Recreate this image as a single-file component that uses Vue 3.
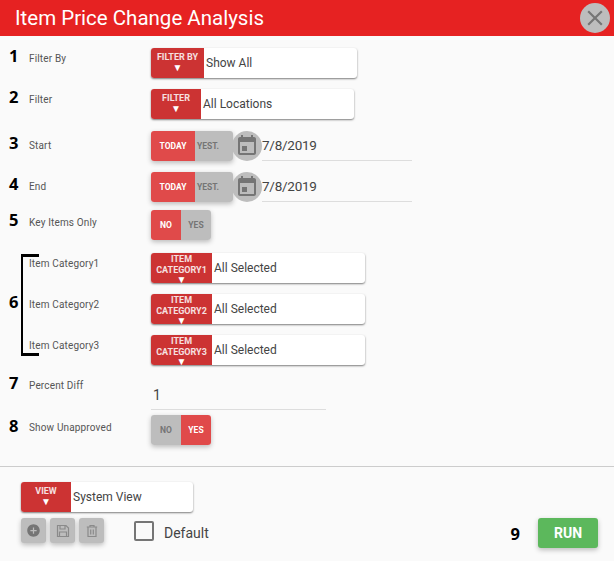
<script setup>
const closeIcon = 'M19 6.41L17.59 5 12 10.59 6.41 5 5 6.41 10.59 12 5 17.59 6.41 19 12 13.41 17.59 19 19 17.59 13.41 12z'
const calendarIcon = 'M12 12H7v5h5v-5zM16 1v2H8V1H6v2H5c-1.11 0-1.99.9-1.99 2L3 19c0 1.1.89 2 2 2h14c1.1 0 2-.9 2-2V5c0-1.1-.9-2-2-2h-1V1h-2zm3 18H5V8h14v11z'
const addIcon = 'M12 2C6.48 2 2 6.48 2 12s4.48 10 10 10 10-4.48 10-10S17.52 2 12 2zm5 11h-4v4h-2v-4H7v-2h4V7h2v4h4v2z'
const saveIcon = 'M1.5 1.5H10L12.5 4V12.5H1.5ZM4 1.5V5H9V1.5M3.5 12.5V8H10.5V12.5'
const trashIcon = 'M1.8 3H12.2M5 3V1.5H9V3M3 3V12.5H11V3M5.7 5.5V10.5M8.3 5.5V10.5'
const categories = ['1', '2', '3']
</script>

<template>
  <div class="page">
    <header class="header">
      <h1 class="title">Item Price Change Analysis</h1>
      <button class="close" aria-label="Close">
        <svg viewBox="0 0 24 24" width="26" height="26"><path :d="closeIcon" /></svg>
      </button>
    </header>

    <main class="form">
      <div class="row r-first lab-a">
        <span class="num">1</span><span class="label">Filter By</span>
        <div class="drop w-by">
          <div class="drop-btn"><span>FILTER BY</span><span class="arrow">▼</span></div>
          <div class="drop-val">Show All</div>
        </div>
      </div>
      <div class="row lab-a">
        <span class="num">2</span><span class="label">Filter</span>
        <div class="drop w-filter">
          <div class="drop-btn"><span>FILTER</span><span class="arrow">▼</span></div>
          <div class="drop-val">All Locations</div>
        </div>
      </div>
      <div class="row r-start lab-b">
        <span class="num">3</span><span class="label">Start</span>
        <div class="date">
          <div class="toggle">
            <span class="opt on today">TODAY</span><span class="opt yest">YEST.</span>
          </div>
          <span class="cal"><svg viewBox="0 0 24 24" width="24" height="24"><path :d="calendarIcon" /></svg></span>
          <div class="date-val">7/8/2019</div>
        </div>
      </div>
      <div class="row lab-b">
        <span class="num">4</span><span class="label">End</span>
        <div class="date">
          <div class="toggle">
            <span class="opt on today">TODAY</span><span class="opt yest">YEST.</span>
          </div>
          <span class="cal"><svg viewBox="0 0 24 24" width="24" height="24"><path :d="calendarIcon" /></svg></span>
          <div class="date-val">7/8/2019</div>
        </div>
      </div>
      <div class="row r-key lab-c">
        <span class="num">5</span><span class="label">Key Items Only</span>
        <div class="toggle">
          <span class="opt on yn">NO</span><span class="opt yn">YES</span>
        </div>
      </div>

      <div class="cats">
        <span class="bracket"></span>
        <span class="num six">6</span>
        <div v-for="c in categories" :key="c" class="row lab-d">
          <span class="num"></span><span class="label">Item Category{{ c }}</span>
          <div class="drop w-cat">
            <div class="drop-btn tall"><span>ITEM</span><span>CATEGORY{{ c }}</span><span class="arrow">▼</span></div>
            <div class="drop-val">All Selected</div>
          </div>
        </div>
      </div>

      <div class="row r-pct">
        <span class="num">7</span><span class="label">Percent Diff</span>
        <div class="pct">1</div>
      </div>
      <div class="row r-show lab-c">
        <span class="num">8</span><span class="label">Show Unapproved</span>
        <div class="toggle">
          <span class="opt yn">NO</span><span class="opt on yn">YES</span>
        </div>
      </div>
    </main>

    <footer class="footer">
      <div class="drop w-view">
        <div class="drop-btn"><span>VIEW</span><span class="arrow">▼</span></div>
        <div class="drop-val">System View</div>
      </div>
      <div class="foot-bar">
        <div class="actions">
          <button class="act">
            <svg viewBox="0 0 24 24" width="15" height="15"><path class="solid" :d="addIcon" /></svg>
          </button>
          <button class="act">
            <svg viewBox="0 0 14 14" width="14" height="14"><path class="line" :d="saveIcon" /></svg>
          </button>
          <button class="act">
            <svg viewBox="0 0 14 14" width="14" height="14"><path class="line" :d="trashIcon" /></svg>
          </button>
        </div>
        <span class="check"></span>
        <span class="default">Default</span>
        <span class="num nine">9</span>
        <button class="run">RUN</button>
      </div>
    </footer>
  </div>
</template>

<style>
html, body { margin: 0; background: #fafafa; }
</style>

<style scoped>
.page {
  width: 614px;
  height: 561px;
  overflow: hidden;
  position: relative;
  background: #fafafa;
  font-family: Roboto, "Liberation Sans", sans-serif;
  color: #333;
}
.header {
  height: 36px;
  background: #e62222;
  display: flex;
  align-items: flex-start;
  justify-content: space-between;
  padding: 0 4px 0 15px;
}
.title {
  margin: 0;
  font-size: 20.5px;
  font-weight: 400;
  line-height: 36px;
  color: #fff;
}
.close {
  width: 30px;
  height: 30px;
  margin-top: 3px;
  padding: 0;
  border: 0;
  border-radius: 50%;
  background: #bdbdbd;
  display: flex;
  align-items: center;
  justify-content: center;
}
.close svg { fill: #757575; }

.form { padding: 12px 0 0 9px; }
.row {
  display: flex;
  align-items: flex-start;
  height: 30px;
  margin-top: 11px;
  position: relative;
}
.r-first { margin-top: 0; }
.r-start { margin-top: 12px; }
.r-key { margin-top: 8px; }
.cats { position: relative; margin-top: 13px; }
.cats .row:first-of-type { margin-top: 0; }
.r-pct { margin-top: 10px; height: 35px; }
.r-show { margin-top: 5px; }

.num {
  width: 20px;
  flex: none;
  font-family: "Open Sans", sans-serif;
  font-size: 16.5px;
  font-weight: 700;
  line-height: 14px;
  color: #000;
}
.label {
  width: 122px;
  flex: none;
  font-size: 10px;
  line-height: 12px;
  letter-spacing: 0.15px;
  color: #555;
}
.lab-a .num { padding-top: 1px; }
.lab-a .label { padding-top: 5px; }
.lab-b .num { padding-top: 5px; }
.lab-b .label { padding-top: 9px; }
.lab-c .num { padding-top: 3px; }
.lab-c .label { padding-top: 7px; }
.lab-d .label { padding-top: 5px; }
.r-show .num { padding-top: 4px; }
.r-pct .num { padding-top: 1px; }
.r-pct .label { padding-top: 5px; }

.bracket {
  position: absolute;
  left: 12px;
  top: 1px;
  width: 16px;
  height: 96px;
  border-style: solid;
  border-color: #000;
  border-width: 3px 0 3px 2px;
}
.six { position: absolute; left: 0; top: 42px; }

.drop {
  display: flex;
  height: 30px;
  background: #fff;
  border-radius: 3px;
  box-shadow: 0 1px 2px rgba(0, 0, 0, 0.5);
}
.w-by { width: 206px; }
.w-filter { width: 203px; }
.w-cat { width: 214px; }
.w-view { width: 172px; }
.drop-btn {
  flex: none;
  display: flex;
  flex-direction: column;
  align-items: center;
  justify-content: center;
  padding: 0 6px 2px;
  background: #cc3333;
  border-radius: 3px 0 0 3px;
  color: #f6e0e0;
  font-size: 9px;
  font-weight: 700;
  line-height: 10px;
  white-space: nowrap;
}
.drop-btn.tall { padding: 3px 6px 0; height: 27px; line-height: 10.5px; }
.w-by .drop-btn { width: 41px; }
.w-filter .drop-btn { width: 38px; }
.w-cat .drop-btn { width: 49px; }
.w-view .drop-btn { width: 38px; }
.arrow { font-size: 10px; line-height: 11px; color: #fff; }
.tall .arrow { line-height: 10px; }
.drop-val {
  flex: 1;
  padding-left: 2px;
  font-size: 12px;
  line-height: 31px;
  color: #444;
}

.date { display: flex; align-items: flex-start; }
.toggle {
  display: flex;
  height: 30px;
  border-radius: 3px;
  overflow: hidden;
  box-shadow: 0 2px 5px rgba(0, 0, 0, 0.25);
}
.opt {
  display: flex;
  align-items: center;
  justify-content: center;
  background: #bdbdbd;
  color: #757575;
  font-size: 8.5px;
  font-weight: 700;
}
.opt.on { background: #e04a4a; color: #fff; }
.today { width: 44px; }
.yest { width: 36px; padding-left: 2px; justify-content: flex-start; }
.yn { width: 30px; }
.cal {
  width: 30px;
  height: 30px;
  margin-left: -1px;
  border-radius: 50%;
  background: #bdbdbd;
  display: flex;
  align-items: center;
  justify-content: center;
}
.cal svg { fill: #757575; }
.date-val {
  width: 150px;
  height: 29px;
  border-bottom: 1px solid #ddd;
  font-size: 13.5px;
  letter-spacing: -0.25px;
  line-height: 28px;
  color: #444;
}
.pct {
  width: 173px;
  height: 34px;
  padding-left: 2px;
  border-bottom: 1px solid #ddd;
  font-size: 14px;
  line-height: 40px;
  color: #444;
}

.footer {
  position: absolute;
  left: 0;
  right: 0;
  top: 466px;
  bottom: 0;
  border-top: 1px solid #ccc;
  padding: 15px 16px 0 21px;
}
.foot-bar {
  display: flex;
  align-items: flex-start;
  margin-top: 6px;
}
.actions { display: flex; gap: 4px; width: 113px; }
.act {
  width: 25px;
  height: 25px;
  padding: 0;
  border: 0;
  border-radius: 3px;
  background: #bdbdbd;
  box-shadow: 0 2px 5px rgba(0, 0, 0, 0.25);
  display: flex;
  align-items: center;
  justify-content: center;
}
.solid { fill: #757575; }
.line { fill: none; stroke: #8a8a8a; stroke-width: 1.2; }
.check {
  width: 16px;
  height: 16px;
  margin-top: 3px;
  border: 2px solid #757575;
  border-radius: 2px;
  flex: none;
}
.default {
  margin-left: 10px;
  font-size: 14px;
  line-height: 30px;
  color: #444;
}
.nine { width: auto; margin-left: auto; margin-right: 18px; padding-top: 9px; }
.run {
  width: 60px;
  height: 30px;
  padding: 0;
  border: 0;
  border-radius: 3px;
  background: #5cb85c;
  box-shadow: 0 2px 5px rgba(0, 0, 0, 0.25);
  color: #fff;
  font-family: Roboto, sans-serif;
  font-size: 14px;
  font-weight: 700;
}
</style>
